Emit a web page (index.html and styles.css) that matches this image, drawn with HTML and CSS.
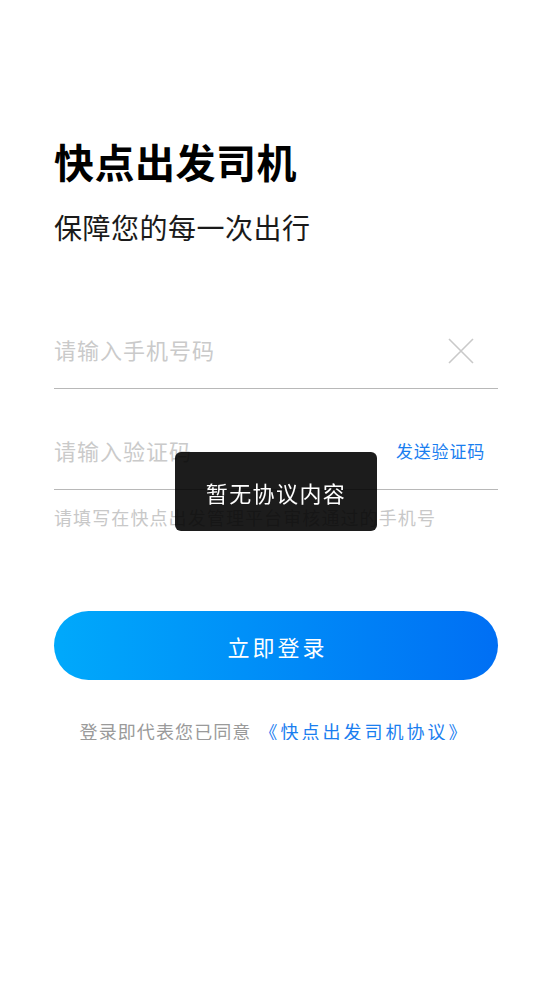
FILE: index.html
```html
<!DOCTYPE html>
<html lang="zh-CN">

<head>
    <meta charset="UTF-8">
    <meta name="viewport" content="width=device-width, initial-scale=1.0">
    <title>快点出发司机</title>
    <link rel="stylesheet" href="styles.css">
</head>

<body>

	<main class="login">

		<h1 class="title">快点出发司机</h1>
		<p class="subtitle">保障您的每一次出行</p>

		<div class="field">
			<input class="field-input" type="tel" placeholder="请输入手机号码">
			<span class="clear">
				<svg width="26" height="26" viewBox="0 0 26 26">
					<path d="M1 1 L25 25 M25 1 L1 25" stroke="#c9c9c9" stroke-width="1.6" fill="none"/>
				</svg>
			</span>
		</div>

		<div class="field field-code">
			<input class="field-input" type="text" placeholder="请输入验证码">
			<span class="send-code">发送验证码</span>
		</div>

		<p class="hint">请填写在快点出发管理平台审核通过的手机号</p>

		<button class="login-btn">立即登录</button>

		<p class="agreement">
			<span>登录即代表您已同意</span>
			<a href="#">《快点出发司机协议》</a>
		</p>

	</main>

	<div class="toast">暂无协议内容</div>

</body>
</html>
```

FILE: styles.css
```css
		body {
			margin: 0;
			padding: 0;
			background-color: #fff;
			font-family: "Noto Sans CJK SC", "Noto Sans", sans-serif;
			color: #111;
		}

		.login {
			padding: 141px 54px 0;
		}

		.title {
			margin: 0;
			font-size: 40px;
			line-height: 40px;
			font-weight: 700;
			letter-spacing: 0.5px;
			color: #000;
		}

		.subtitle {
			margin: 32px 0 0;
			font-size: 28px;
			line-height: 28px;
			letter-spacing: 0.5px;
			color: #1a1a1a;
		}

		.field {
			display: flex;
			align-items: center;
			height: 74px;
			margin-top: 73px;
			border-bottom: 1px solid #b8b8b8;
		}

		.field-code {
			margin-top: 26px;
		}

		.field-input {
			flex: 1;
			min-width: 0;
			border: none;
			outline: none;
			padding: 0 0 4px;
			background: transparent;
			font-family: inherit;
			font-size: 22px;
			line-height: 24px;
			letter-spacing: 1px;
			color: #333;
		}

		.field-input::placeholder {
			color: #cacaca;
		}

		.clear {
			display: flex;
			margin-right: 24px;
		}

		.send-code {
			font-size: 17px;
			color: #1a7ef0;
			letter-spacing: 0.8px;
			margin-right: 13px;
			padding-bottom: 3px;
		}

		.hint {
			margin: 18px 0 0;
			font-size: 18px;
			line-height: 18px;
			letter-spacing: 1.1px;
			color: #c8c8c8;
		}

		.login-btn {
			display: block;
			width: 100%;
			height: 69px;
			margin-top: 85px;
			border: none;
			border-radius: 35px;
			background: linear-gradient(to right, #00a9fb, #006ff4);
			color: #fff;
			font-family: inherit;
			font-size: 22px;
			letter-spacing: 3px;
			padding: 0 0 0 3px;
		}

		.agreement {
			display: flex;
			justify-content: center;
			gap: 8px;
			margin: 42px 0 0;
			padding-right: 3px;
			font-size: 18px;
			line-height: 18px;
			letter-spacing: 1.1px;
			color: #9a9a9a;
		}

		.agreement a {
			color: #1a7ef0;
			text-decoration: none;
			letter-spacing: 3px;
		}

		.toast {
			position: fixed;
			left: 175px;
			top: 452px;
			width: 202px;
			height: 79px;
			display: flex;
			align-items: center;
			justify-content: center;
			background-color: rgba(0, 0, 0, 0.89);
			border-radius: 6px;
			color: #fff;
			font-size: 22px;
			letter-spacing: 1.4px;
		}
```
